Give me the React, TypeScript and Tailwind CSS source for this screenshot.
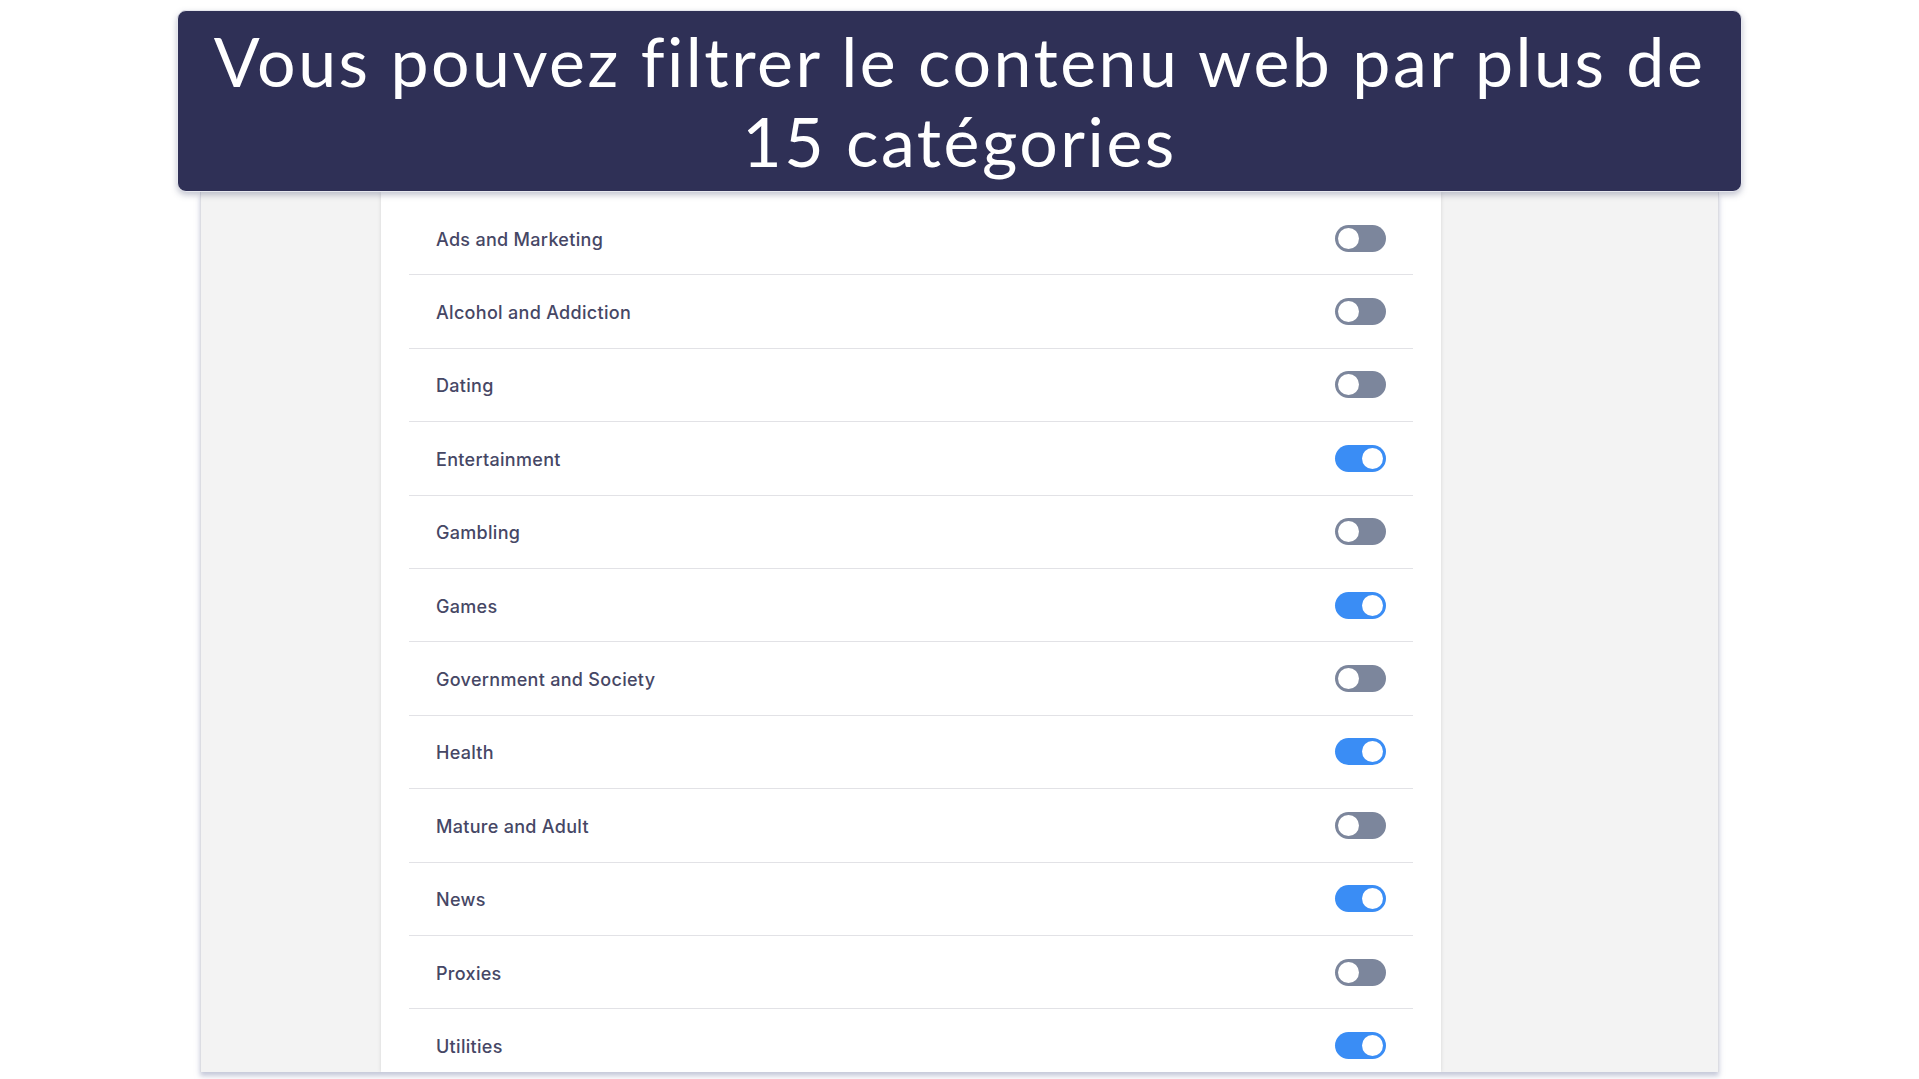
import React from 'react';

const categories: { name: string; on: boolean }[] = [
  { name: 'Ads and Marketing', on: false },
  { name: 'Alcohol and Addiction', on: false },
  { name: 'Dating', on: false },
  { name: 'Entertainment', on: true },
  { name: 'Gambling', on: false },
  { name: 'Games', on: true },
  { name: 'Government and Society', on: false },
  { name: 'Health', on: true },
  { name: 'Mature and Adult', on: false },
  { name: 'News', on: true },
  { name: 'Proxies', on: false },
  { name: 'Utilities', on: true },
];

function Toggle({ on }: { on: boolean }) {
  return (
    <div
      className={`flex h-[27px] w-[51px] items-center rounded-full px-[3px] ${
        on ? 'justify-end bg-[#3a8df5]' : 'justify-start bg-[#7c869c]'
      }`}
    >
      <div className="h-[21px] w-[21px] rounded-full bg-white" />
    </div>
  );
}

export default function App() {
  return (
    <div className="flex h-[1079px] w-full flex-col items-center overflow-hidden bg-white">
      <div className="relative z-10 mt-[10px] flex h-[182px] w-[1565px] flex-col items-center justify-center rounded-[9px] border border-[#e6e7ee] bg-[#2f3056] shadow-[0_3px_6px_rgba(80,85,120,0.35)]">
        <p
          className="text-center text-[68px] leading-[80px] tracking-[2.5px] text-white"
          style={{ fontFamily: 'Lato, "Open Sans", sans-serif' }}
        >
          Vous pouvez filtrer le contenu web par plus de
          <br />
          15 catégories
        </p>
      </div>

      <div className="flex h-[880px] w-[1519px] shrink-0 overflow-hidden border-x border-[#dcdde3] bg-[#f3f3f3] shadow-[0_4px_5px_rgba(150,155,185,0.55)]">
        <div className="ml-[180px] w-[1060px] bg-white pt-[10px] shadow-[0_0_4px_rgba(0,0,0,0.12)]">
          <div className="mx-[28px]">
            {categories.map((c) => (
              <div
                key={c.name}
                className="flex h-[73.4px] items-center justify-between border-b border-[#e2e2e6] pl-[27px] pr-[27px]"
              >
                <span
                  className="pt-[2px] text-[18px] font-medium tracking-[0.3px] text-[#464765]"
                  style={{ fontFamily: 'Inter, "Noto Sans", sans-serif' }}
                >
                  {c.name}
                </span>
                <Toggle on={c.on} />
              </div>
            ))}
          </div>
        </div>
      </div>
    </div>
  );
}
